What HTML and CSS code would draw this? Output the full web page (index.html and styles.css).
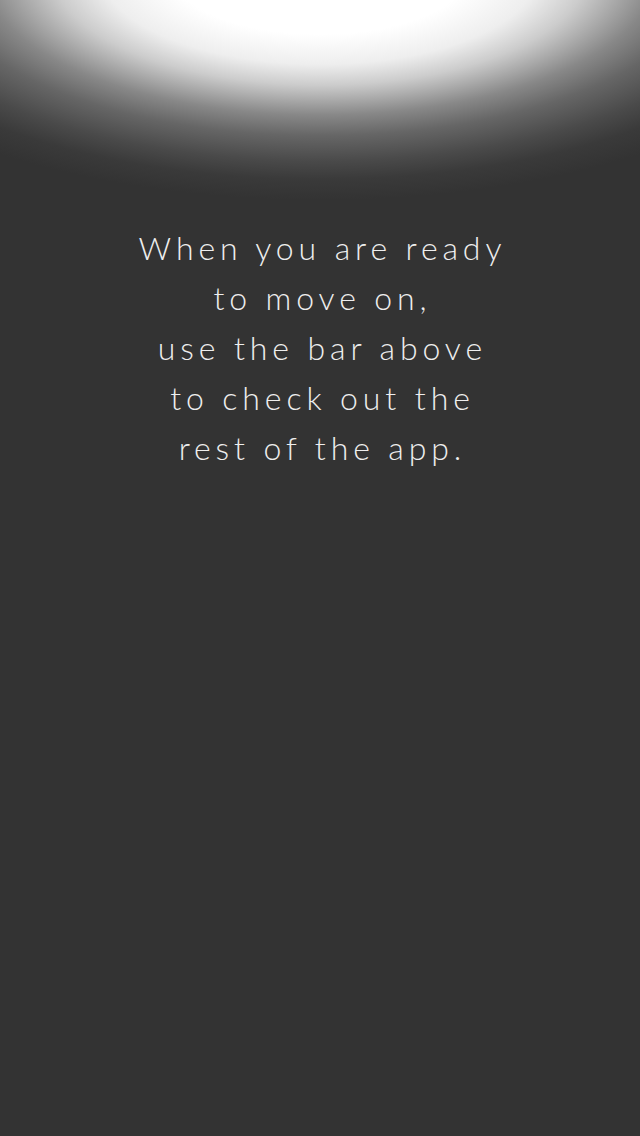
FILE: index.html
```html
<!DOCTYPE html>
<html lang="en">
<head>
<meta charset="utf-8">
<title>Intro</title>
<link rel="stylesheet" href="styles.css">
</head>
<body class="screen">
  <main class="message">
    <p class="message-line">When you are ready</p>
    <p class="message-line">to move on,</p>
    <p class="message-line">use the bar above</p>
    <p class="message-line">to check out the</p>
    <p class="message-line">rest of the app.</p>
  </main>
</body>
</html>
```

FILE: styles.css
```css
html, body {
  margin: 0;
  padding: 0;
  width: 640px;
  height: 1136px;
}
.screen {
  background-color: #333333;
  background-image: radial-gradient(ellipse 535px 230px at 50% -30px,
    #ffffff 0%, #ffffff 28%, #eeeeee 41%, #cccccc 50%, #aaaaaa 56.5%, #888888 63%,
    #666666 72%, #4a4a4a 83%, #3a3a3a 91%, #333333 100%);
  background-repeat: no-repeat;
  overflow: hidden;
}
.message {
  display: flex;
  flex-direction: column;
  align-items: center;
  padding-top: 223px;
}
.message-line {
  margin: 0;
  padding-left: 4.9px;
  font-family: "Lato", "Open Sans", sans-serif;
  font-weight: 300;
  font-size: 32px;
  line-height: 50px;
  letter-spacing: 4.9px;
  color: #eeeeee;
  white-space: nowrap;
}
```
